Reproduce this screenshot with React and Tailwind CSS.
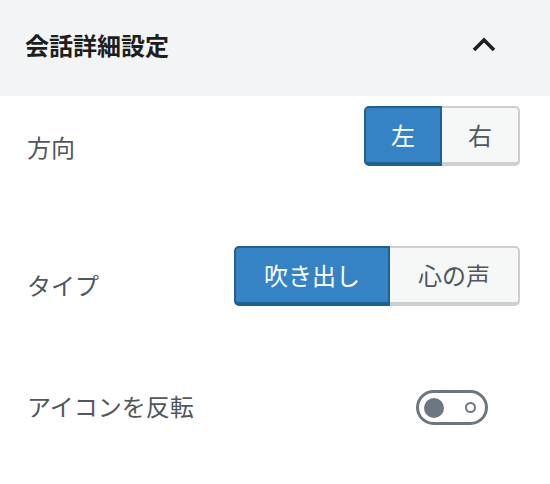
export default function App() {
  const font = { fontFamily: '"Noto Sans CJK JP", "Noto Sans", sans-serif' };
  return (
    <div className="w-[550px] h-[484px] bg-white" style={font}>
      <div className="h-[96px] bg-[#f3f4f6] flex items-center justify-between pl-[25px] pr-[54px]">
        <div className="text-[24px] font-bold text-[#1e1e1e] leading-none pb-[6px]">会話詳細設定</div>
        <svg width="24" height="16" viewBox="0 0 24 16" className="mb-[6px]">
          <path d="M2 13 L12 3 L22 13" fill="none" stroke="#1e1e1e" strokeWidth="3.6" />
        </svg>
      </div>
      <div className="flex flex-col pl-[27px] pr-[30px]">
        <div className="flex justify-between items-start pt-[10px] h-[150px]">
          <div className="mt-[25px] text-[24px] leading-[32px] text-[#50575e]">方向</div>
          <div className="flex">
            <div className="w-[78px] h-[60px] flex items-center justify-center bg-[#3582c4] text-white text-[24px] rounded-l-[5px] border-2 border-b-4 border-[#20628f]">左</div>
            <div className="w-[78px] h-[60px] flex items-center justify-center bg-[#f6f7f7] text-[#50575e] text-[24px] rounded-r-[5px] border-2 border-b-4 border-l-0 border-[#cfcfcf]">右</div>
          </div>
        </div>
        <div className="flex justify-between items-start h-[144px]">
          <div className="mt-[23px] text-[24px] leading-[32px] text-[#50575e]">タイプ</div>
          <div className="flex">
            <div className="w-[156px] h-[60px] flex items-center justify-center bg-[#3582c4] text-white text-[24px] rounded-l-[5px] border-2 border-b-4 border-[#20628f]">吹き出し</div>
            <div className="w-[130px] h-[60px] flex items-center justify-center bg-[#f6f7f7] text-[#50575e] text-[24px] rounded-r-[5px] border-2 border-b-4 border-l-0 border-[#cfcfcf]">心の声</div>
          </div>
        </div>
        <div className="flex justify-between items-center">
          <div className="text-[24px] leading-[32px] text-[#50575e] -mt-[4px]">アイコンを反転</div>
          <div className="w-[72px] h-[35px] rounded-full border-[3px] border-[#6c7781] flex items-center justify-between pl-[5px] pr-[9px] mr-[32px]">
            <div className="w-[20px] h-[20px] rounded-full bg-[#6c7781]"></div>
            <div className="w-[11px] h-[11px] rounded-full border-[2px] border-[#6c7781]"></div>
          </div>
        </div>
      </div>
    </div>
  );
}
